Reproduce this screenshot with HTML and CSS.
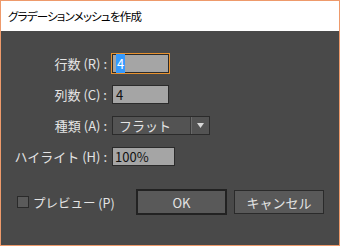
FILE: index.html
```html
<!DOCTYPE html>
<html lang="ja">

<head>
  <meta charset="UTF-8">
  <title>グラデーションメッシュを作成</title>
  <link rel="stylesheet" href="styles.css">
</head>

<body>

  <div class="dialog">
    <div class="title-bar">グラデーションメッシュを作成</div>

    <div class="dialog-body">
      <!-- fields -->
      <div class="form">
        <label class="label">行数 (R) :</label>
        <div class="field focused"><span class="selected">4</span></div>

        <label class="label">列数 (C) :</label>
        <div class="field">4</div>

        <label class="label">種類 (A) :</label>
        <div class="select">
          <span class="select-text">フラット</span>
          <span class="select-arrow">
            <svg width="7" height="5" viewBox="0 0 7 5"><path d="M0 0H7L3.5 5Z" fill="#d8d8d8"/></svg>
          </span>
        </div>

        <label class="label">ハイライト (H) :</label>
        <div class="field wide">100%</div>
      </div>

      <!-- buttons -->
      <div class="actions">
        <label class="preview"><span class="checkbox"></span>プレビュー (P)</label>
        <button class="btn default">OK</button>
        <button class="btn">キャンセル</button>
      </div>
    </div>
  </div>

</body>

</html>
```

FILE: styles.css
```css
* {
  margin: 0;
  padding: 0;
  box-sizing: border-box;
}

body {
  font-family: "Noto Sans CJK JP", sans-serif;
  font-size: 12px;
  background-color: #494949;
}

.dialog {
  width: 340px;
  height: 246px;
  border: 1px solid #ee9a6b;
  background-color: #494949;
  display: flex;
  flex-direction: column;
}

.title-bar {
  height: 30px;
  background-color: #ffffff;
  color: #000;
  padding-left: 7px;
  font-size: 11.5px;
  letter-spacing: -0.8px;
  line-height: 30px;
  font-feature-settings: "palt";
}

.dialog-body {
  flex: 1;
  padding-top: 23px;
}

.form {
  display: grid;
  grid-template-columns: 106px auto;
  grid-auto-rows: 19px;
  column-gap: 5px;
  row-gap: 12px;
  align-items: center;
}

.label {
  text-align: right;
  color: #e4e4e4;
  font-size: 13px;
  line-height: 19px;
  white-space: nowrap;
}

.field {
  width: 57px;
  height: 19px;
  background-color: #a5a5a5;
  border: 1px solid #2b2b2b;
  color: #111;
  font-size: 13px;
  line-height: 17px;
  padding-left: 3px;
}

.field.wide {
  width: 63px;
  padding-left: 2px;
}

.field.focused {
  outline: 1px solid #e8922f;
}

.selected {
  background-color: #3399ff;
  color: #fff;
  padding: 0 1px;
}

.select {
  width: 98px;
  height: 19px;
  background-color: #535353;
  border: 1px solid #2b2b2b;
  display: flex;
  align-items: center;
}

.select-text {
  flex: 1;
  color: #e4e4e4;
  font-size: 13px;
  padding-left: 6px;
  line-height: 17px;
  border-right: 1px solid #3a3a3a;
  box-shadow: 1px 0 0 #6a6a6a;
}

.select-arrow {
  width: 18px;
  display: flex;
  justify-content: center;
}

.actions {
  margin-top: 23px;
  padding-left: 16px;
  display: flex;
  align-items: center;
}

.preview {
  width: 119px;
  color: #e4e4e4;
  font-size: 12.5px;
  display: flex;
  align-items: center;
  gap: 4px;
}

.checkbox {
  width: 12px;
  height: 12px;
  background-color: #5a5a5a;
  border: 1px solid #2a2a2a;
}

.btn {
  width: 90px;
  height: 24px;
  margin-left: 7px;
  font-family: inherit;
  font-size: 13px;
  color: #e4e4e4;
  background-color: #595959;
  border: 1px solid #2a2a2a;
}

.btn.default {
  width: 91px;
  height: 26px;
  margin-left: 0;
  border: 2px solid #222;
}
```
